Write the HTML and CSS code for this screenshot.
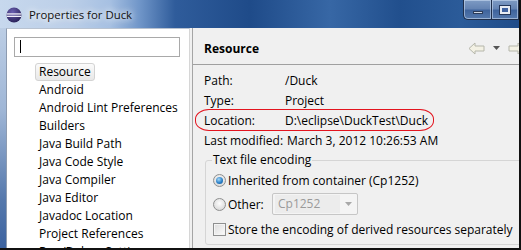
FILE: index.html
```html
<!DOCTYPE html>
<html lang="en">
<head>
<meta charset="UTF-8" />
<title>Properties for Duck</title>
<link rel="stylesheet" href="styles.css">
</head>
<body>
<div class="window">
    <div class="titlebar">
        <svg class="app-icon" width="16" height="16" viewBox="0 0 16 16">
            <defs>
                <radialGradient id="orb" cx="0.4" cy="0.3" r="0.8">
                    <stop offset="0" stop-color="#6a5fb0" />
                    <stop offset="1" stop-color="#221a4e" />
                </radialGradient>
                <clipPath id="orbClip"><circle cx="8" cy="8" r="7.5" /></clipPath>
            </defs>
            <circle cx="8" cy="8" r="7.5" fill="url(#orb)" />
            <g clip-path="url(#orbClip)" fill="#f2f0fa">
                <rect x="0" y="6.3" width="16" height="1.3" />
                <rect x="0" y="8.7" width="16" height="1.3" />
            </g>
        </svg>
        <span class="title">Properties for Duck</span>
        <div class="caption-buttons">
            <div class="cap-btn min"><span></span></div>
            <div class="cap-btn max"><span></span></div>
        </div>
    </div>

    <div class="frame">
        <div class="nav-pane">
            <div class="filter"><span class="caret"></span></div>
            <ul class="tree">
                <li class="selected">Resource</li>
                <li>Android</li>
                <li>Android Lint Preferences</li>
                <li>Builders</li>
                <li>Java Build Path</li>
                <li>Java Code Style</li>
                <li>Java Compiler</li>
                <li>Java Editor</li>
                <li>Javadoc Location</li>
                <li>Project References</li>
                <li>Run/Debug Settings</li>
            </ul>
        </div>
        <div class="sash"></div>

        <div class="page">
            <div class="page-header">
                <h2>Resource</h2>
                <div class="history">
                    <svg width="17" height="13" viewBox="0 0 17 13">
                        <path d="M1 6.5 L7 1 V4 H16 V9 H7 V12 Z" fill="#f3f1e4" stroke="#b5b6aa" />
                    </svg>
                    <svg class="drop" width="7" height="4" viewBox="0 0 7 4">
                        <path d="M0 0 H7 L3.5 4 Z" fill="#555" />
                    </svg>
                    <svg width="17" height="13" viewBox="0 0 17 13">
                        <path d="M16 6.5 L10 1 V4 H1 V9 H10 V12 Z" fill="#f3f1e4" stroke="#b5b6aa" />
                    </svg>
                </div>
            </div>

            <div class="props">
                <div class="prop"><span class="key">Path:</span><span>/Duck</span></div>
                <div class="prop"><span class="key">Type:</span><span>Project</span></div>
                <div class="prop marked"><span class="key">Location:</span><span>D:\eclipse\DuckTest\Duck</span></div>
                <div class="prop"><span class="key">Last modified:</span><span class="late">March 3, 2012 10:26:53 AM</span></div>
            </div>

            <fieldset class="group">
                <legend>Text file encoding</legend>
                <div class="option">
                    <span class="radio checked"></span>
                    <span>Inherited from container (Cp1252)</span>
                </div>
                <div class="option">
                    <span class="radio"></span>
                    <span class="other-label">Other:</span>
                    <div class="combo">
                        <span class="combo-text">Cp1252</span>
                        <span class="combo-arrow">
                            <svg width="7" height="4" viewBox="0 0 7 4"><path d="M0 0 H7 L3.5 4 Z" fill="#a8a8a8" /></svg>
                        </span>
                    </div>
                </div>
                <div class="option">
                    <span class="checkbox"></span>
                    <span>Store the encoding of derived resources separately</span>
                </div>
            </fieldset>
        </div>
    </div>
</div>
</body>
</html>
```

FILE: styles.css
```css
* {
box-sizing: border-box;
}

body {
margin: 0;
background: #fff;
font-family: 'Segoe UI', 'Open Sans', sans-serif;
font-size: 12px;
color: #000;
}

.window {
width: 521px;
height: 250px;
display: flex;
flex-direction: column;
border-right: 2px solid #111;
border-bottom: 2px solid #111;
overflow: hidden;
background: linear-gradient(180deg, #c6d6ea 0, #9fb6d6 110px, #5578ac 200px, #3b62a0 250px);
}

/* Aero title bar */
.titlebar {
height: 28px;
flex: none;
display: flex;
align-items: center;
padding-left: 6px;
background: linear-gradient(90deg, #c7d8ed 0, #bccfe8 70px, #a6c0e2 110px, #6f95c8 140px, #2f5c9b 175px, #1f4b89 250px, #3767a5 330px, #214f8d 400px, #2b5b99 460px, #1f4b88 521px);
}

.app-icon {
flex: none;
margin-top: 1px;
}

.title {
margin-left: 7px;
font-size: 11.4px;
color: #111;
text-shadow: 0 0 6px #fff, 0 0 10px rgba(255, 255, 255, 0.9);
}

.caption-buttons {
margin-left: auto;
align-self: flex-start;
display: flex;
}

.cap-btn {
width: 28px;
height: 20px;
border: 1px solid #1f2f4c;
border-top: none;
box-shadow: inset 0 0 0 1px rgba(210, 225, 245, 0.55);
background: linear-gradient(180deg, #7e9bc4 0, #6584b3 45%, #3f649d 55%, #5579ad 100%);
display: flex;
align-items: center;
justify-content: center;
}

.cap-btn.min {
border-bottom-left-radius: 5px;
border-right: none;
}

.cap-btn.min span {
width: 10px;
height: 3px;
margin-top: 6px;
background: #cfd8e6;
border: 1px solid #2c3c5a;
}

.cap-btn.max span {
width: 10px;
height: 8px;
background: #3f62a0;
border: 2px solid #e6ebf3;
outline: 1px solid #24375a;
}

/* dialog body */
.frame {
flex: 1;
display: flex;
padding-left: 6px;
min-height: 0;
}

.nav-pane {
width: 184px;
flex: none;
background: #fff;
border-left: 1px solid #8d9bb0;
border-top: 1px solid #b8c2d0;
border-right: 1px solid #d6d6d6;
padding: 8px 0 0 7px;
}

.filter {
width: 166px;
height: 20px;
border: 1px solid #a9a9a9;
padding: 2px 0 0 5px;
}

.caret {
display: block;
width: 1px;
height: 13px;
background: #000;
}

.tree {
list-style: none;
margin: 6px 0 0 21px;
padding: 0;
}

.tree li {
display: table;
height: 18px;
line-height: 16px;
padding: 0 3px;
border: 1px solid transparent;
border-radius: 3px;
white-space: nowrap;
}

.tree li.selected {
border-color: #d3d3d3;
background: linear-gradient(180deg, #fbfbfb, #e8e8e8);
}

.sash {
width: 3px;
flex: none;
background: #f0f0f0;
border-right: 1px solid #a5a5a5;
}

.page {
flex: 1;
background: #f0f0f0;
padding-left: 11px;
overflow: hidden;
}

.page-header {
height: 37px;
padding-top: 4px;
display: flex;
align-items: center;
border-bottom: 1px solid #a0a0a0;
margin-left: -11px;
padding-left: 11px;
}

.page-header h2 {
margin: 0;
font-size: 12px;
font-weight: bold;
}

.history {
margin-left: auto;
margin-right: -6px;
display: flex;
align-items: center;
gap: 5px;
}

.history .drop {
margin: 0 3px;
}

.props {
padding-top: 5px;
}

.prop {
height: 20px;
display: flex;
align-items: center;
position: relative;
white-space: nowrap;
}

.key {
width: 81px;
flex: none;
}

.late {
margin-left: 2px;
}

/* red hand-drawn mark around the location row */
.prop.marked::after {
content: '';
position: absolute;
left: -9px;
top: -1px;
width: 237px;
height: 20px;
border: 1px solid #e3141e;
border-radius: 14px / 10px;
}

.group {
margin: 2px -12px 0 1px;
padding: 0 8px 4px 6px;
border: 1px solid #d5d5d5;
border-radius: 3px;
}

.group legend {
padding: 0 1px;
line-height: 16px;
}

.option {
height: 22px;
display: flex;
align-items: center;
margin-top: 2px;
white-space: nowrap;
}

.option:first-of-type {
margin-top: 1px;
}

.option:last-child {
margin-top: 3px;
}

.radio {
width: 13px;
height: 13px;
flex: none;
margin: 0 2px 0 1px;
border-radius: 50%;
border: 1px solid #8e8f8f;
background: radial-gradient(circle at 50% 40%, #fdfdfd 0, #e2e2e2 60%, #cfcfcf 100%);
display: flex;
align-items: center;
justify-content: center;
}

.radio.checked::after {
content: '';
width: 7px;
height: 7px;
border-radius: 50%;
background: radial-gradient(circle at 40% 35%, #a6d8f6 0, #2b81c9 55%, #0b4d8c 100%);
}

.other-label {
width: 44px;
}

.combo {
width: 86px;
height: 22px;
border: 1px solid #c6c6c6;
border-radius: 2px;
background: #f4f4f4;
display: flex;
align-items: center;
}

.combo-text {
flex: 1;
height: 18px;
margin-left: 2px;
padding-left: 3px;
line-height: 18px;
color: #9a9a9a;
background: #ececec;
}

.combo-arrow {
width: 17px;
display: flex;
justify-content: center;
}

.checkbox {
width: 13px;
height: 13px;
flex: none;
margin: 0 2px 0 1px;
border: 1px solid #8e8f8f;
background: linear-gradient(135deg, #dcdcdc, #fbfbfb);
box-shadow: inset 0 0 0 1px #f4f4f4;
}
```
